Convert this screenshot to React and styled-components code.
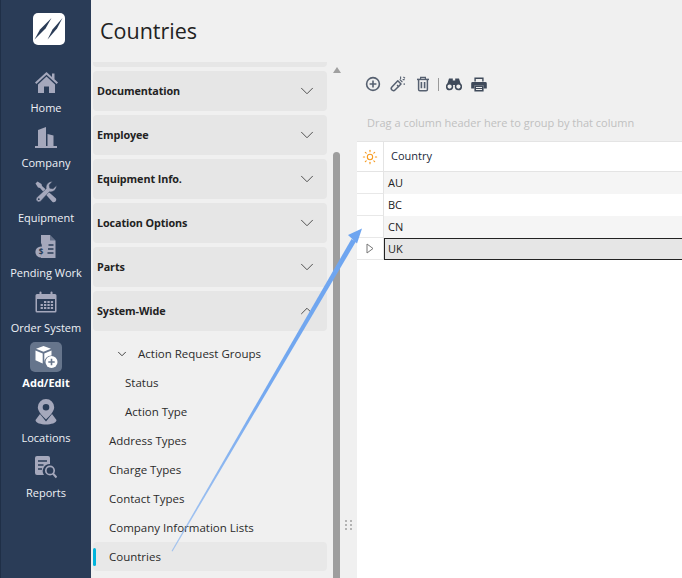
import styled, { createGlobalStyle } from "styled-components";
import { ChevronDown, ChevronUp, Sun } from "lucide-react";

const GlobalStyle = createGlobalStyle`
  html, body {
    margin: 0;
    height: 100%;
    overflow: hidden;
    background: #f0f0f0;
  }
  body {
    font-family: "Open Sans", "Noto Sans", sans-serif;
  }
`;

const Page = styled.div`
  display: flex;
  width: 682px;
  height: 578px;
  position: relative;
  overflow: hidden;
  background: #f0f0f0;
`;

const Sidebar = styled.nav`
  width: 91px;
  flex-shrink: 0;
  border-left: 1px solid #1f2f47;
  background: #2a3c57;
  display: flex;
  flex-direction: column;
  align-items: center;
  padding-top: 13px;
  box-sizing: border-box;
`;

const Logo = styled.div`
  width: 32px;
  height: 32px;
  border-radius: 5px;
  background: #fff;
  margin: 0 0 22px 5px;
  display: flex;
`;

const NavItem = styled.div`
  width: 100%;
  height: 55px;
  display: flex;
  flex-direction: column;
  align-items: center;
  color: ${(p) => (p.$active ? "#ffffff" : "#eef1f6")};
  font-size: 11px;
  font-weight: ${(p) => (p.$active ? 700 : 400)};
  line-height: 15px;
  white-space: nowrap;
`;

const NavIcon = styled.div`
  width: 32px;
  height: 30px;
  border-radius: 5px;
  display: flex;
  align-items: center;
  justify-content: center;
  background: ${(p) => (p.$active ? "#66758c" : "transparent")};
  color: #a5a8bc;
  margin-bottom: 3px;
`;

const Main = styled.div`
  flex: 1;
  min-width: 0;
  display: flex;
  flex-direction: column;
`;

const Title = styled.h1`
  margin: 0;
  height: 62px;
  padding: 16px 0 0 9px;
  box-sizing: border-box;
  font-size: 21.5px;
  font-weight: 400;
  line-height: 30px;
  color: #222;
`;

const Body = styled.div`
  flex: 1;
  display: flex;
  min-height: 0;
`;

const Menu = styled.div`
  width: 234px;
  margin-left: 2px;
  flex-shrink: 0;
  display: flex;
  flex-direction: column;
`;

const MenuTopEdge = styled.div`
  height: 5px;
  background: #e6e6e6;
  border-radius: 0 0 4px 4px;
  margin-bottom: 4px;
`;

const AccordionHeader = styled.div`
  height: 40px;
  flex-shrink: 0;
  margin-bottom: 4px;
  border-radius: 4px;
  background: #e6e6e6;
  display: flex;
  align-items: center;
  justify-content: space-between;
  padding: 0 9px 0 4px;
  color: #222;
  svg {
    color: #444;
  }
`;

const SectionName = styled.span`
  font-size: 10.8px;
  font-weight: 700;
  letter-spacing: -0.1px;
  margin-bottom: 2px;
`;

const TreeList = styled.div`
  display: flex;
  flex-direction: column;
  margin-top: 4px;
`;

const TreeItem = styled.div`
  height: 29px;
  flex-shrink: 0;
  display: flex;
  align-items: center;
  gap: 9px;
  padding-left: ${(p) => p.$indent}px;
  border-radius: 4px;
  position: relative;
  font-size: 11.5px;
  color: #2b2b2b;
  background: ${(p) => (p.$active ? "#e8e8e8" : "transparent")};
`;

const ActiveMark = styled.span`
  position: absolute;
  left: 0;
  top: 6px;
  width: 3px;
  height: 18px;
  border-radius: 2px;
  background: #00b4dc;
`;

const ScrollTrack = styled.div`
  width: 7px;
  margin-left: 6px;
  flex-shrink: 0;
  display: flex;
  flex-direction: column;
  align-items: center;
`;

const ScrollArrow = styled.div`
  margin-top: 5px;
  width: 0;
  height: 0;
  border-left: 4px solid transparent;
  border-right: 4px solid transparent;
  border-bottom: 6px solid #a0a0a0;
`;

const ScrollThumb = styled.div`
  margin-top: 79px;
  flex: 1;
  width: 7px;
  border-radius: 4px 4px 0 0;
  background: #9e9e9e;
`;

const Splitter = styled.div`
  width: 17px;
  flex-shrink: 0;
  display: flex;
  justify-content: center;
  padding-top: 458px;
  box-sizing: border-box;
`;

const GripDots = styled.div`
  width: 7px;
  height: 11px;
  display: grid;
  grid-template-columns: 2px 2px;
  grid-auto-rows: 2px;
  gap: 2px 3px;
  span {
    background: #b4b4b4;
  }
`;

const Content = styled.div`
  flex: 1;
  min-width: 0;
  display: flex;
  flex-direction: column;
`;

const Toolbar = styled.div`
  height: 44px;
  display: flex;
  align-items: center;
  padding-left: 8px;
  gap: 9px;
  color: #566070;
`;

const ToolDivider = styled.span`
  width: 1px;
  height: 13px;
  margin: 0 -2px;
  background: #9a9a9a;
`;

const GroupHint = styled.div`
  height: 35px;
  padding-left: 10px;
  font-size: 11px;
  line-height: 33px;
  color: #c0c0c0;
`;

const Grid = styled.div`
  flex: 1;
  background: #fff;
  border-top: 1px solid #e4e4e4;
`;

const HeaderRow = styled.div`
  display: flex;
  height: 30px;
  box-sizing: border-box;
  border-bottom: 1px solid #e4e4e4;
`;

const Row = styled.div`
  display: flex;
  height: 22px;
`;

const Indicator = styled.div`
  width: 27px;
  flex-shrink: 0;
  box-sizing: border-box;
  border-right: 1px solid #e4e4e4;
  border-bottom: ${(p) => (p.$plain ? "none" : "1px solid #e8e8e8")};
  display: flex;
  align-items: center;
  justify-content: center;
`;

const HeaderCell = styled.div`
  flex: 1;
  padding: 0 0 2px 7px;
  display: flex;
  align-items: center;
  font-size: 11px;
  color: #1c2a3a;
`;

const Cell = styled.div`
  flex: 1;
  padding: 0 0 2px ${(p) => (p.$current ? 3 : 4)}px;
  box-sizing: border-box;
  display: flex;
  align-items: center;
  font-size: 11px;
  color: #222;
  background: ${(p) => (p.$current ? "#e6e6e6" : p.$alt ? "#f5f5f5" : "#fff")};
  border: ${(p) => (p.$current ? "1px solid #222" : "none")};
  border-right: none;
`;

const Annotation = styled.svg`
  position: absolute;
  left: 0;
  top: 0;
  pointer-events: none;
`;

const HomeIcon = () => (
  <svg width="23" height="23" viewBox="0 0 23 23" fill="currentColor">
    <path d="M11.5 1 L17 6 V2.5 H19.5 V8.3 L23 11.6 L21.6 13 L11.5 3.8 L1.4 13 L0 11.6 Z" />
    <path d="M11.5 5.6 L20 13.4 V22 H14 V15.5 H9 V22 H3 V13.4 Z" />
  </svg>
);

const CompanyIcon = () => (
  <svg width="22" height="21" viewBox="0 0 22 21" fill="currentColor">
    <path d="M3 19 V3 L11 0 V19 Z" />
    <path d="M12.5 19 V7 L18.5 8.5 V19 Z" />
    <rect x="0" y="19" width="22" height="2" />
  </svg>
);

const ToolsIcon = () => (
  <svg width="22" height="22" viewBox="0 0 22 22" fill="currentColor">
    <path d="M0.5 2.5 L2.5 0.5 L6.5 3 L7 5 L21 17.5 A2.6 2.6 0 0 1 17.5 21 L5 7 L3 6.5 Z" />
    <path d="M21.5 4.5 A6 6 0 0 1 14.2 10.8 L5.6 20.2 A2.7 2.7 0 0 1 1.8 16.4 L11.2 7.8 A6 6 0 0 1 17.5 .5 L14.2 4 L14.8 7.2 L18 7.8 Z" stroke="#2a3c57" strokeWidth="0.5" />
    <circle cx="3.8" cy="18.2" r="0.9" fill="#2a3c57" />
  </svg>
);

const InvoiceIcon = () => (
  <svg width="22" height="24" viewBox="0 0 22 24" fill="currentColor">
    <path d="M6 0 H15 L20.5 5.5 V23 H6 V14 A6 6 0 0 0 6 8 Z" />
    <circle cx="6" cy="17" r="5.6" />
    <text x="6" y="20" fontSize="8" fontWeight="700" textAnchor="middle" fill="#2a3c57">$</text>
    <path d="M13.5 10 H18.5 M13 14 H18.5 M12.5 18 H18.5" stroke="#2a3c57" strokeWidth="1.3" />
    <path d="M15 0 V5.5 H20.5" fill="#2a3c57" opacity="0.5" />
  </svg>
);

const CalendarIcon = () => (
  <svg width="22" height="22" viewBox="0 0 22 22" fill="currentColor">
    <path d="M2 3 H20 A1.5 1.5 0 0 1 21.5 4.5 V20 A1.5 1.5 0 0 1 20 21.5 H2 A1.5 1.5 0 0 1 .5 20 V4.5 A1.5 1.5 0 0 1 2 3 Z M2 8 V20 H20 V8 Z" fillRule="evenodd" />
    <rect x="4.5" y="0.5" width="2" height="5" rx="1" />
    <rect x="15.5" y="0.5" width="2" height="5" rx="1" />
    <path d="M9 10 h2.3 v2 h-2.3 z M12.4 10 h2.3 v2 h-2.3 z M15.8 10 h2.3 v2 h-2.3 z M5.6 13 h2.3 v2 h-2.3 z M9 13 h2.3 v2 h-2.3 z M12.4 13 h2.3 v2 h-2.3 z M15.8 13 h2.3 v2 h-2.3 z M5.6 16 h2.3 v2 h-2.3 z M9 16 h2.3 v2 h-2.3 z M12.4 16 h2.3 v2 h-2.3 z M15.8 16 h2.3 v2 h-2.3 z" />
  </svg>
);

const AddEditIcon = () => (
  <svg width="24" height="24" viewBox="0 0 24 24" fill="#fff">
    <path d="M9.5 1 L17 3.8 L9.5 6.8 L2 3.8 Z" />
    <path d="M1.5 5.5 L8.7 8.4 V18.5 L1.5 15.3 Z" />
    <path d="M10.3 8.4 L17.5 5.5 V10.5 A7 7 0 0 0 10.3 17.5 Z" />
    <circle cx="17.5" cy="17" r="6" />
    <path d="M17.5 13.8 V20.2 M14.3 17 H20.7" stroke="#66758c" strokeWidth="1.6" />
  </svg>
);

const PinIcon = () => (
  <svg width="22" height="26" viewBox="0 0 22 26" fill="currentColor">
    <path fillRule="evenodd" d="M11 0 A8.2 8.2 0 0 1 19.2 8.2 C19.2 12.5 14 17.5 11 20.5 C8 17.5 2.8 12.5 2.8 8.2 A8.2 8.2 0 0 1 11 0 Z M11 5 A3.3 3.3 0 1 0 11 11.6 A3.3 3.3 0 1 0 11 5 Z" />
    <path d="M5 15 L0.5 21 C0.5 24 6 25.5 11 25.5 C16 25.5 21.5 24 21.5 21 L17 15 L11 22.5 Z" />
  </svg>
);

const ReportIcon = () => (
  <svg width="22" height="23" viewBox="0 0 22 23" fill="currentColor">
    <path d="M2 0 H13 A2 2 0 0 1 15 2 V8 A7 7 0 0 0 9 19 H2 A2 2 0 0 1 0 17 V2 A2 2 0 0 1 2 0 Z" />
    <path d="M3 5 H12 M3 9 H8.5 M3 13 H7" stroke="#2a3c57" strokeWidth="1.4" />
    <circle cx="15" cy="14.5" r="4.2" fill="none" stroke="currentColor" strokeWidth="1.7" />
    <path d="M18 17.5 L21.5 21.5" stroke="currentColor" strokeWidth="2" />
  </svg>
);

const AddTool = () => (
  <svg width="16" height="16" viewBox="0 0 16 16" fill="none" stroke="currentColor" strokeWidth="1.6">
    <circle cx="8" cy="8" r="6.4" />
    <path d="M8 4.6 V11.4 M4.6 8 H11.4" />
  </svg>
);

const WandTool = () => (
  <svg width="16" height="16" viewBox="0 0 16 16" fill="none" stroke="currentColor" strokeWidth="1.5">
    <path d="M7.8 4.8 L11 8 L5 14 A1.6 1.6 0 0 1 1.9 11 Z" strokeLinejoin="round" />
    <path d="M9.7 3.4 L12.4 6.1 M7 9 L9 11" strokeWidth="1.2" />
    <path d="M10.6 0.6 V3 M14.6 3.6 H12.6 M14.2 7.2 V9 M13.4 1 L15 2.2" strokeWidth="1.1" />
  </svg>
);

const TrashTool = () => (
  <svg width="16" height="16" viewBox="0 0 16 16" fill="none" stroke="currentColor" strokeWidth="1.5">
    <path d="M2 3.4 H14" />
    <path d="M5.6 3 V1.4 H10.4 V3" strokeWidth="1.2" />
    <path d="M3.6 3.4 V13.5 A1.3 1.3 0 0 0 4.9 14.8 H11.1 A1.3 1.3 0 0 0 12.4 13.5 V3.4" />
    <path d="M6.4 6 V12.2 M9.6 6 V12.2" strokeWidth="1.6" />
  </svg>
);

const BinocularsTool = () => (
  <svg width="16" height="14" viewBox="0 0 16 14">
    <path d="M3 1.5 H6.8 V9 H.6 Z M9.2 1.5 H13 L15.4 9 H9.2 Z M6.5 3.5 H9.5 V8 H6.5 Z" fill="#3f4a5a" />
    <circle cx="3.6" cy="9.6" r="2.9" fill="#f0f0f0" stroke="#3f4a5a" strokeWidth="1.5" />
    <circle cx="12.4" cy="9.6" r="2.9" fill="#f0f0f0" stroke="#3f4a5a" strokeWidth="1.5" />
  </svg>
);

const PrintTool = () => (
  <svg width="16" height="15" viewBox="0 0 16 15" fill="#3f4a5a">
    <path fillRule="evenodd" d="M3.4 0.5 H12.6 V4.5 H11.2 V2 H4.8 V4.5 H3.4 Z" />
    <path d="M1.6 5 H14.4 A1.4 1.4 0 0 1 15.8 6.4 V11.4 H12.6 V8.6 H3.4 V11.4 H.2 V6.4 A1.4 1.4 0 0 1 1.6 5 Z" />
    <path fillRule="evenodd" d="M3.4 8.6 H12.6 V14.5 H3.4 Z M5 10 V11 H11 V10 Z M5 12 V13 H11 V12 Z" />
  </svg>
);

const navItems = [
  { label: "Home", icon: <HomeIcon /> },
  { label: "Company", icon: <CompanyIcon /> },
  { label: "Equipment", icon: <ToolsIcon /> },
  { label: "Pending Work", icon: <InvoiceIcon /> },
  { label: "Order System", icon: <CalendarIcon /> },
  { label: "Add/Edit", icon: <AddEditIcon />, active: true },
  { label: "Locations", icon: <PinIcon /> },
  { label: "Reports", icon: <ReportIcon /> },
];

const sections = ["Documentation", "Employee", "Equipment Info.", "Location Options", "Parts"];

const treeItems = [
  { label: "Status", indent: 32 },
  { label: "Action Type", indent: 32 },
  { label: "Address Types", indent: 16 },
  { label: "Charge Types", indent: 16 },
  { label: "Contact Types", indent: 16 },
  { label: "Company Information Lists", indent: 16 },
];

const countries = ["AU", "BC", "CN"];

export default function App() {
  return (
    <Page>
      <GlobalStyle />
      <Sidebar>
        <Logo>
          <svg width="32" height="32" viewBox="0 0 32 32" fill="#2a3c57">
            <path d="M1.5 26.5 L7 16.5 L18.5 5 L12.5 15.5 Z" />
            <path d="M14.5 26.5 L19.5 16.5 L29.5 5 L24 15.5 Z" />
          </svg>
        </Logo>
        {navItems.map((item) => (
          <NavItem key={item.label} $active={item.active}>
            <NavIcon $active={item.active}>{item.icon}</NavIcon>
            {item.label}
          </NavItem>
        ))}
      </Sidebar>
      <Main>
        <Title>Countries</Title>
        <Body>
          <Menu>
            <MenuTopEdge />
            {sections.map((name) => (
              <AccordionHeader key={name}>
                <SectionName>{name}</SectionName>
                <ChevronDown size={22} strokeWidth={1} />
              </AccordionHeader>
            ))}
            <AccordionHeader>
              <SectionName>System-Wide</SectionName>
              <ChevronUp size={22} strokeWidth={1} />
            </AccordionHeader>
            <TreeList>
              <TreeItem $indent={22}>
                <ChevronDown size={14} strokeWidth={1.5} />
                Action Request Groups
              </TreeItem>
              {treeItems.map((item) => (
                <TreeItem key={item.label} $indent={item.indent}>
                  {item.label}
                </TreeItem>
              ))}
              <TreeItem $indent={16} $active>
                <ActiveMark />
                Countries
              </TreeItem>
            </TreeList>
          </Menu>
          <ScrollTrack>
            <ScrollArrow />
            <ScrollThumb />
          </ScrollTrack>
          <Splitter>
            <GripDots>
              {Array.from({ length: 6 }, (_, i) => (
                <span key={i} />
              ))}
            </GripDots>
          </Splitter>
          <Content>
            <Toolbar>
              <AddTool />
              <WandTool />
              <TrashTool />
              <ToolDivider />
              <BinocularsTool />
              <PrintTool />
            </Toolbar>
            <GroupHint>Drag a column header here to group by that column</GroupHint>
            <Grid>
              <HeaderRow>
                <Indicator $plain>
                  <Sun size={16} color="#f79a1e" strokeWidth={1.6} />
                </Indicator>
                <HeaderCell>Country</HeaderCell>
              </HeaderRow>
              {countries.map((code, i) => (
                <Row key={code}>
                  <Indicator />
                  <Cell $alt={i % 2 === 0}>{code}</Cell>
                </Row>
              ))}
              <Row>
                <Indicator>
                  <svg width="8" height="11" viewBox="0 0 8 11">
                    <path d="M1 1 L7 5.5 L1 10 Z" fill="#fff" stroke="#777" strokeWidth="1" />
                  </svg>
                </Indicator>
                <Cell $current>UK</Cell>
              </Row>
            </Grid>
          </Content>
        </Body>
      </Main>
      <Annotation width="682" height="578" viewBox="0 0 682 578">
        <defs>
          <filter id="soft" x="-5%" y="-5%" width="110%" height="110%">
            <feGaussianBlur stdDeviation="0.4" />
          </filter>
          <linearGradient id="fade" gradientUnits="userSpaceOnUse" x1="172" y1="551" x2="355" y2="240">
            <stop offset="0" stopColor="#6ea5f0" stopOpacity="0.55" />
            <stop offset="0.5" stopColor="#6ea5f0" stopOpacity="0.95" />
            <stop offset="1" stopColor="#6ea5f0" />
          </linearGradient>
        </defs>
        <g filter="url(#soft)">
          <path d="M171.5 551 L351.5 239 L356 241.5 L172.5 551.5 Z" fill="url(#fade)" />
          <path d="M362 228.5 L348 235 L357 243.5 Z" fill="#6ea5f0" />
        </g>
      </Annotation>
    </Page>
  );
}
